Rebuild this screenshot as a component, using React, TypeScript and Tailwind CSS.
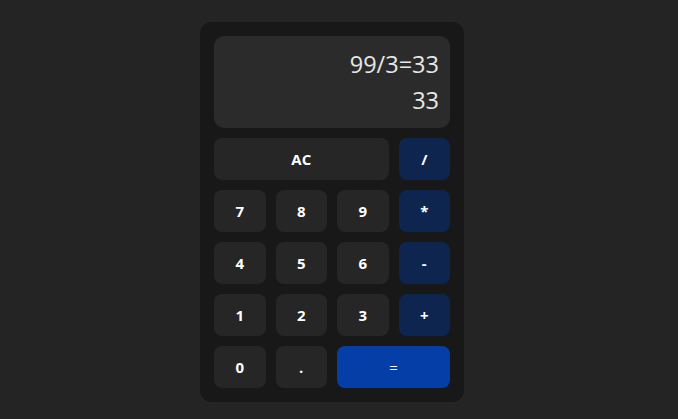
import React from "react";

const keys: { label: string; kind: "num" | "op" | "eq"; span?: string }[] = [
  { label: "AC", kind: "num", span: "col-span-3" },
  { label: "/", kind: "op" },
  { label: "7", kind: "num" },
  { label: "8", kind: "num" },
  { label: "9", kind: "num" },
  { label: "*", kind: "op" },
  { label: "4", kind: "num" },
  { label: "5", kind: "num" },
  { label: "6", kind: "num" },
  { label: "-", kind: "op" },
  { label: "1", kind: "num" },
  { label: "2", kind: "num" },
  { label: "3", kind: "num" },
  { label: "+", kind: "op" },
  { label: "0", kind: "num" },
  { label: ".", kind: "num" },
  { label: "=", kind: "eq", span: "col-span-2" },
];

export default function App() {
  return (
    <main
      className="min-h-screen w-full bg-[#242424] flex justify-center pt-[22px] pr-[14px]"
      style={{ fontFamily: '"Open Sans", "Noto Sans", sans-serif' }}
    >
      <div className="w-[264px] h-[380px] bg-[#181818] rounded-[12px] p-[14px] flex flex-col gap-[10px]">
        <div className="h-[92px] bg-[#2b2b2b] rounded-[10px] px-[11px] py-[10px] flex flex-col items-end text-[#e6e6e6] text-[23.5px] leading-[36px]">
          <div>99/3=33</div>
          <div>33</div>
        </div>
        <div className="grid grid-cols-4 gap-[10px]">
          {keys.map((k) => (
            <button
              key={k.label}
              className={
                "h-[42px] rounded-[8px] text-white text-[15px] font-bold flex items-center justify-center " +
                (k.span ? k.span + " " : "") +
                (k.kind === "op"
                  ? "bg-[#0e2550]"
                  : k.kind === "eq"
                  ? "bg-[#063ea8] font-normal"
                  : "bg-[#262626]")
              }
            >
              {k.label}
            </button>
          ))}
        </div>
      </div>
    </main>
  );
}
